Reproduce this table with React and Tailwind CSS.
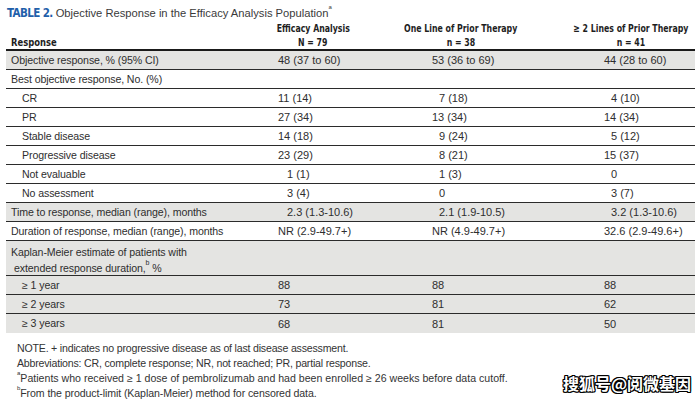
import React from "react";

const S = 0;
const rows = [
  { label: "Objective response, % (95% CI)", gray: true, vals: [["48 (37 to 60)", S], ["53 (36 to 69)", S], ["44 (28 to 60)", S]] },
  { label: "Best objective response, No. (%)", vals: null },
  { label: "CR", indent: true, vals: [["11 (14)", S], ["7 (18)", 1], ["4 (10)", 1]] },
  { label: "PR", indent: true, vals: [["27 (34)", S], ["13 (34)", S], ["14 (34)", S]] },
  { label: "Stable disease", indent: true, vals: [["14 (18)", S], ["9 (24)", 1], ["5 (12)", 1]] },
  { label: "Progressive disease", indent: true, vals: [["23 (29)", S], ["8 (21)", 1], ["15 (37)", S]] },
  { label: "Not evaluable", indent: true, vals: [["1 (1)", 1], ["1 (3)", 1], ["0", 1]] },
  { label: "No assessment", indent: true, vals: [["3 (4)", 1], ["0", 1], ["3 (7)", 1]] },
  { label: "Time to response, median (range), months", gray: true, vals: [["2.3 (1.3-10.6)", 1], ["2.1 (1.9-10.5)", 1], ["3.2 (1.3-10.6)", 1]] },
  { label: "Duration of response, median (range), months", vals: [["NR (2.9-49.7+)", S], ["NR (4.9-49.7+)", S], ["32.6 (2.9-49.6+)", S]] },
  { km: true, gray: true },
  { label: "\u2265 1 year", indent: true, gray: true, vals: [["88", S], ["88", S], ["88", S]] },
  { label: "\u2265 2 years", indent: true, gray: true, vals: [["73", S], ["81", S], ["62", S]] },
  { label: "\u2265 3 years", indent: true, gray: true, last: true, vals: [["68", S], ["81", S], ["50", S]] },
];

const padNormal = ["pl-[16px]", "pl-[22px]", "pl-[24px]"];
const padShift = ["pl-[25px]", "pl-[29px]", "pl-[31px]"];

function Row({ r, first }) {
  const base =
    "grid grid-cols-[256px_148px_170px_115px] " +
    (r.gray ? "bg-[#e4e4e2] " : "bg-white ") +
    (r.last ? "" : "border-b border-[#2b2b2b] ") +
    (first ? "border-t-2 border-t-[#1a1a1a] " : "");
  if (r.km) {
    return (
      <div className={base + "h-[35px]"}>
        <div className="pl-[5px] pt-[3px] leading-[16px] text-[10.6px] tracking-[-0.1px]">
          <div>Kaplan-Meier estimate of patients with</div>
          <div className="pl-[3px]">
            extended response duration,<sup className="text-[7px] align-[4px]">b</sup> %
          </div>
        </div>
        <div />
        <div />
        <div />
      </div>
    );
  }
  return (
    <div className={base + (first ? "h-[21px]" : "h-[19px]") + " items-center pt-[1px]"}>
      <div className={(r.indent ? "pl-[16px]" : "pl-[5px]") + " text-[10.6px] tracking-[-0.1px]"}>{r.label}</div>
      {r.vals
        ? r.vals.map(([t, sh], i) => (
            <div key={i} className={sh ? padShift[i] : padNormal[i]}>
              {t}
            </div>
          ))
        : [<div key="a" />, <div key="b" />, <div key="c" />]}
    </div>
  );
}

function HeadCell({ top, bottom }) {
  return (
    <div className="w-[102px] flex flex-col items-center">
      <div className="whitespace-nowrap scale-x-[0.79]">{top}</div>
      <div className="whitespace-nowrap scale-x-[0.79]">{bottom}</div>
    </div>
  );
}

export default function App() {
  return (
    <div className="w-[700px] h-[403px] bg-white relative overflow-hidden font-['Liberation_Sans',Arial,sans-serif] text-[11px] text-[#2e2e2e]">
      <div className="pl-[7px] pt-[6px] flex items-baseline gap-[3px] leading-[14px]">
        <span className="font-['DejaVu_Sans_Condensed',sans-serif] font-bold text-[11.5px] tracking-[-0.6px] text-[#1f60aa]">TABLE 2.</span>
        <span className="text-[11.2px] text-[#3a3a3a]">
          Objective Response in the Efficacy Analysis Population<sup className="text-[6px] align-[5px]">a</sup>
        </span>
      </div>
      <div className="ml-[6px] w-[689px] grid grid-cols-[256px_148px_170px_115px] h-[30px] font-['DejaVu_Sans_Condensed',sans-serif] font-bold text-[11px] text-[#1e1e1e] leading-[14px] pt-[2px]">
        <div className="pl-[5px] pt-[14px]">
          <span className="inline-block scale-x-[0.85] origin-left">Response</span>
        </div>
        <HeadCell top="Efficacy Analysis" bottom="N = 79" />
        <HeadCell top="One Line of Prior Therapy" bottom="n = 38" />
        <HeadCell top={"\u2265 2 Lines of Prior Therapy"} bottom="n = 41" />
      </div>
      <div className="ml-[6px] w-[689px] mt-[-1px]">
        {rows.map((r, i) => (
          <Row key={i} r={r} first={i === 0} />
        ))}
      </div>
      <div className="pl-[17px] pt-[8px] leading-[15px] text-[10.6px] text-[#333]">
        <div className="tracking-[-0.2px]">NOTE. + indicates no progressive disease as of last disease assessment.</div>
        <div className="tracking-[-0.2px]">Abbreviations: CR, complete response; NR, not reached; PR, partial response.</div>
        <div>
          <sup className="text-[6px] align-[4px]">a</sup>Patients who received {"\u2265"} 1 dose of pembrolizumab and had been enrolled {"\u2265"} 26 weeks before data cutoff.
        </div>
        <div className="tracking-[-0.1px]">
          <sup className="text-[6px] align-[4px]">b</sup>From the product-limit (Kaplan-Meier) method for censored data.
        </div>
      </div>
      <div className="absolute left-[563px] top-[373px] text-[16px] font-bold text-white font-['Noto_Sans_CJK_SC',sans-serif] leading-[20px] [text-shadow:1px_1px_0_#000,-1px_-1px_0_#000,1px_-1px_0_#000,-1px_1px_0_#000,0_1px_0_#000,0_-1px_0_#000,1px_0_0_#000,-1px_0_0_#000]">
        搜狐号@阅微基因
      </div>
    </div>
  );
}
